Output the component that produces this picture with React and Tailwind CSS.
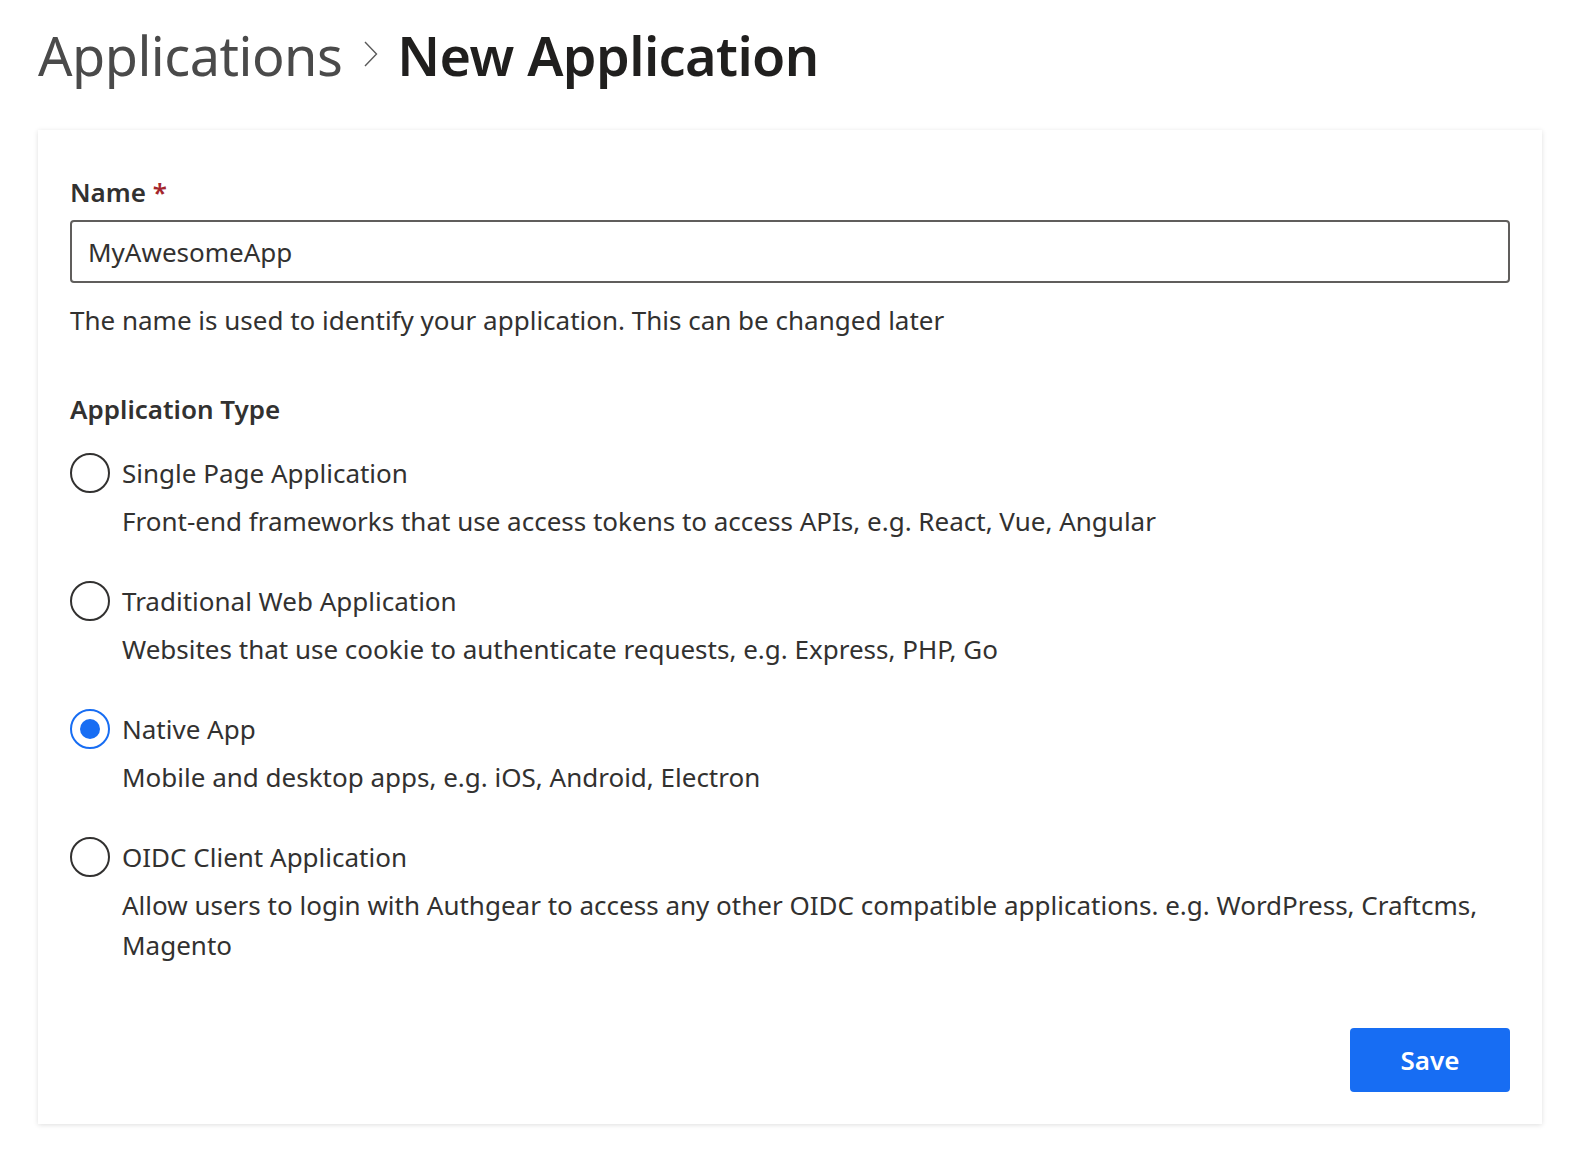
import React, { useState } from "react";

const OPTIONS = [
  {
    id: "spa",
    title: "Single Page Application",
    desc: "Front-end frameworks that use access tokens to access APIs, e.g. React, Vue, Angular",
  },
  {
    id: "web",
    title: "Traditional Web Application",
    desc: "Websites that use cookie to authenticate requests, e.g. Express, PHP, Go",
  },
  {
    id: "native",
    title: "Native App",
    desc: "Mobile and desktop apps, e.g. iOS, Android, Electron",
  },
  {
    id: "oidc",
    title: "OIDC Client Application",
    desc: "Allow users to login with Authgear to access any other OIDC compatible applications. e.g. WordPress, Craftcms, Magento",
  },
];

function RadioOption({ option, checked, onSelect }) {
  return (
    <label className="flex flex-col cursor-pointer" onClick={() => onSelect(option.id)}>
      <div className="flex items-center h-[40px]">
        <span
          className={
            checked
              ? "w-[40px] h-[40px] rounded-full border-2 border-[#176df3] flex items-center justify-center shrink-0"
              : "w-[40px] h-[40px] rounded-full border-2 border-[#323130] flex items-center justify-center shrink-0"
          }
        >
          {checked && <span className="w-[20px] h-[20px] rounded-full bg-[#176df3]" />}
        </span>
        <span className="ml-[12px] text-[26px] leading-[40px] text-[#323130]">{option.title}</span>
      </div>
      <p className="ml-[52px] mt-[8px] text-[26px] leading-[40px] text-[#323130] pr-4">{option.desc}</p>
    </label>
  );
}

export default function App() {
  const [selected, setSelected] = useState("native");
  const [name, setName] = useState("MyAwesomeApp");

  return (
    <div
      className="min-h-screen bg-white px-[38px] pt-[10px] pb-[26px]"
      style={{ fontFamily: '"Noto Sans", "Open Sans", sans-serif' }}
    >
      <div className="flex items-center h-[90px]">
        <span className="text-[54px] font-normal text-[#4a4a4a] tracking-[-0.5px]">Applications</span>
        <svg width="14" height="26" viewBox="0 0 14 26" className="ml-[22px] mr-[19px] mt-[-3px]">
          <path d="M1 1 L12.5 13 L1 25" fill="none" stroke="#5a5a5a" strokeWidth="1.4" />
        </svg>
        <span className="text-[54px] font-semibold text-[#201f1e] tracking-[-0.6px]">New Application</span>
      </div>

      <div className="mt-[30px] w-[1504px] bg-white shadow-[0_1px_5px_rgba(0,0,0,0.13)] px-[32px] pt-[44px] pb-[32px]">
        <div className="text-[26px] leading-[36px] font-semibold text-[#323130]">
          Name <span className="text-[#a4262c]">*</span>
        </div>
        <input
          value={name}
          onChange={(e) => setName(e.target.value)}
          className="mt-[10px] w-full h-[63px] border-2 border-[#605e5c] rounded-[4px] px-[16px] text-[26px] text-[#323130] outline-none"
        />
        <p className="mt-[19px] text-[26px] leading-[36px] text-[#323130]">
          The name is used to identify your application. This can be changed later
        </p>

        <div className="mt-[53px] text-[26px] leading-[36px] font-semibold text-[#323130]">Application Type</div>

        <div className="mt-[26px] flex flex-col gap-[40px]">
          {OPTIONS.map((o) => (
            <RadioOption key={o.id} option={o} checked={selected === o.id} onSelect={setSelected} />
          ))}
        </div>

        <div className="mt-[63px] flex justify-end">
          <button className="w-[160px] h-[64px] rounded-[4px] bg-[#176df3] text-white text-[26px] font-semibold">
            Save
          </button>
        </div>
      </div>
    </div>
  );
}
